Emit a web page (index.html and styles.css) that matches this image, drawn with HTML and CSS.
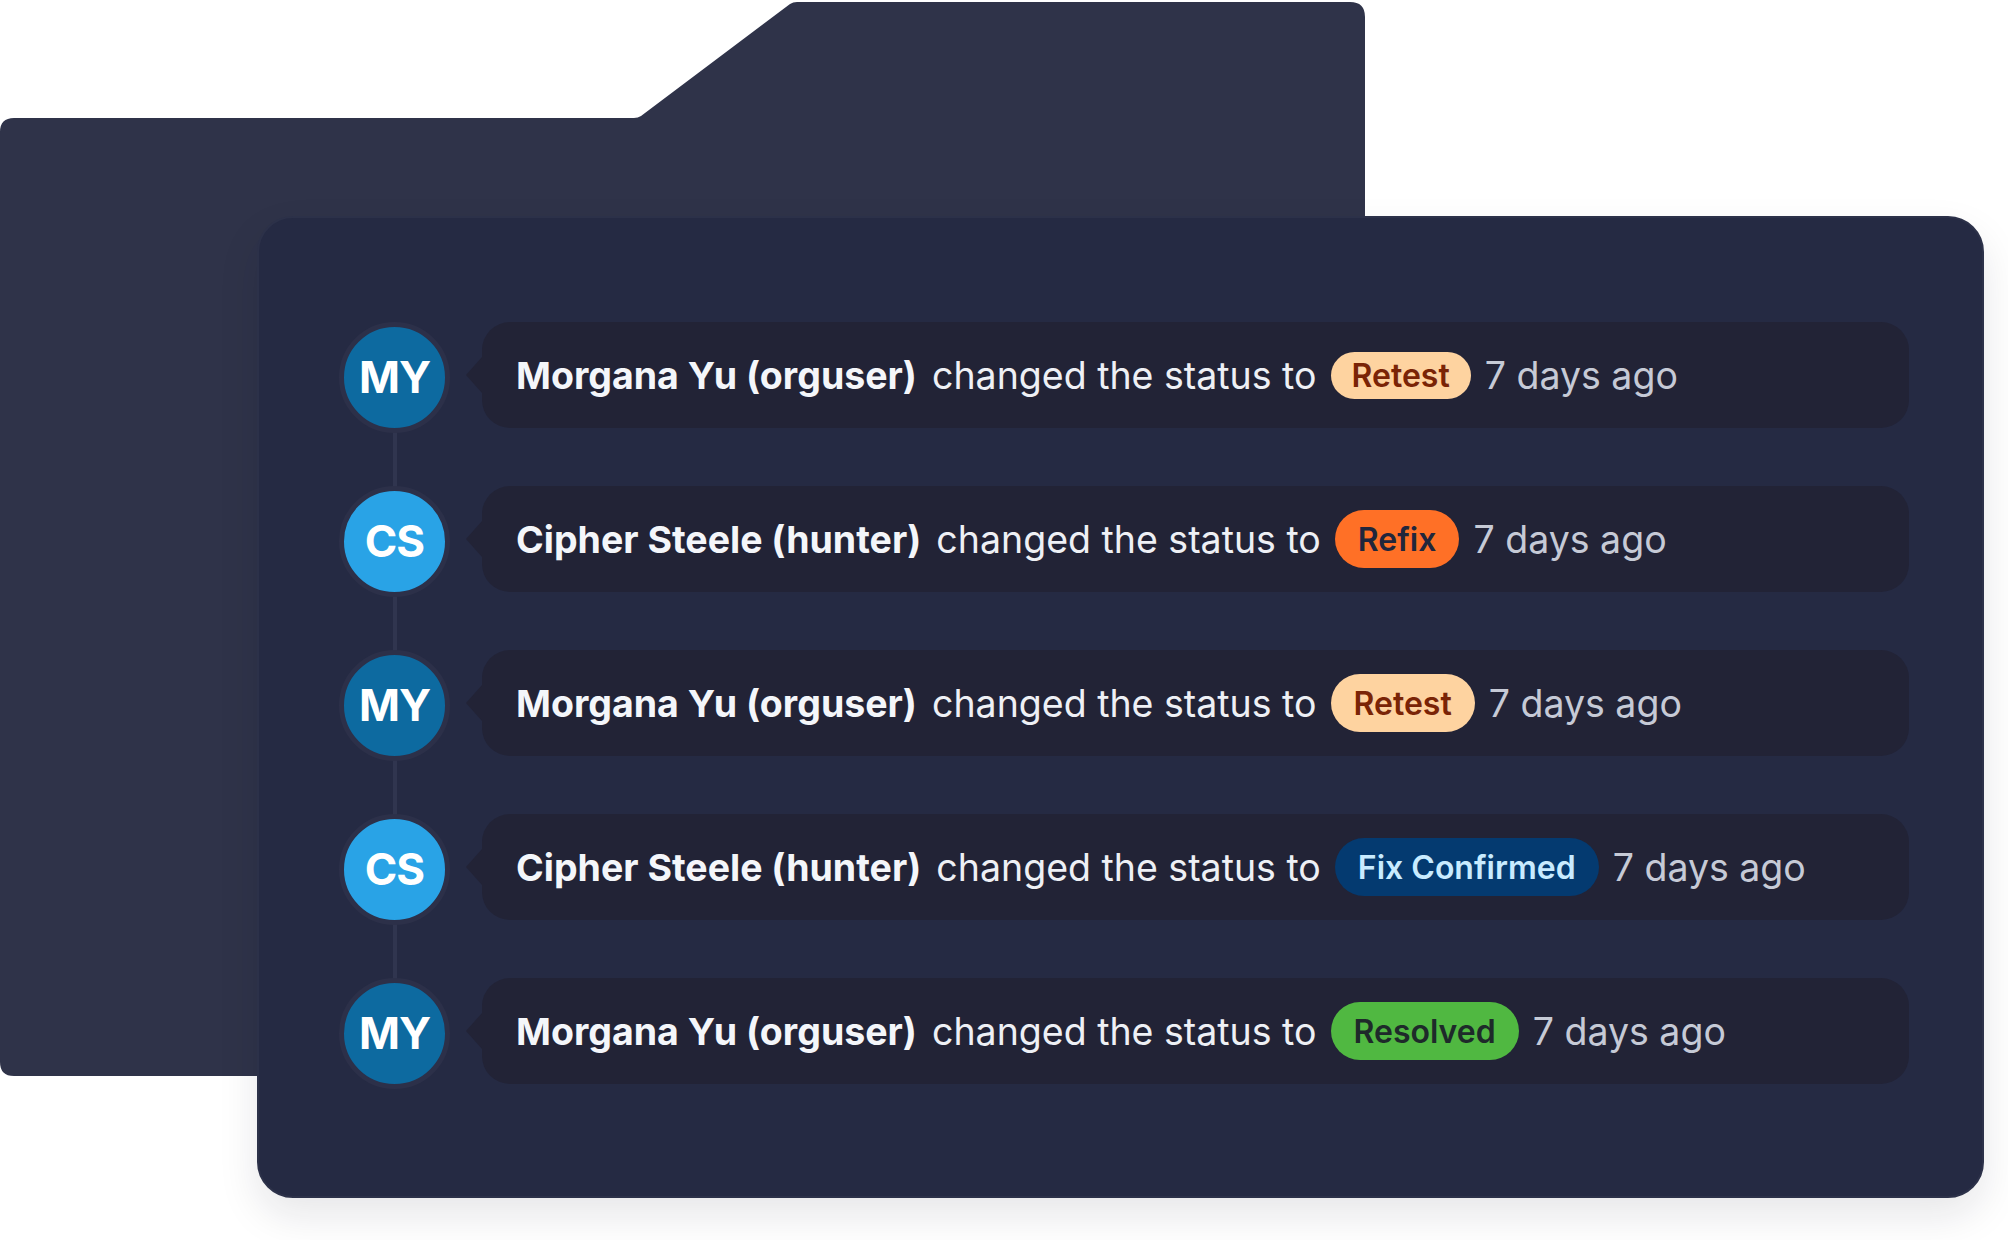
FILE: index.html
```html
<!DOCTYPE html>
<html>
<head>
    <meta charset="utf-8">
    <title>Activity</title>
    <link rel="stylesheet" href="styles.css">
</head>
<body>
    <div class="stage">
        <svg class="folder" width="1365" height="1078" viewBox="0 0 1365 1078">
            <path d="M0,132 Q0,118 14,118 L634,118 Q638,118 641,116 L790,4 Q793,2 797,2 L1350,2 Q1365,2 1365,17 L1365,1076 L14,1076 Q0,1076 0,1062 Z" fill="#2f3349"/>
        </svg>
        <div class="card">
            <ul class="timeline">
                <li class="item">
                    <div class="avatar dark">MY</div>
                    <div class="entry">
                        <b class="who">Morgana Yu (orguser)</b>
                        <span class="what">changed the status to</span>
                        <span class="badge slim retest">Retest</span>
                        <span class="when">7 days ago</span>
                    </div>
                </li>
                <li class="item">
                    <div class="avatar light">CS</div>
                    <div class="entry">
                        <b class="who">Cipher Steele (hunter)</b>
                        <span class="what">changed the status to</span>
                        <span class="badge refix">Refix</span>
                        <span class="when">7 days ago</span>
                    </div>
                </li>
                <li class="item">
                    <div class="avatar dark">MY</div>
                    <div class="entry">
                        <b class="who">Morgana Yu (orguser)</b>
                        <span class="what">changed the status to</span>
                        <span class="badge retest">Retest</span>
                        <span class="when">7 days ago</span>
                    </div>
                </li>
                <li class="item">
                    <div class="avatar light">CS</div>
                    <div class="entry">
                        <b class="who">Cipher Steele (hunter)</b>
                        <span class="what">changed the status to</span>
                        <span class="badge confirmed">Fix Confirmed</span>
                        <span class="when">7 days ago</span>
                    </div>
                </li>
                <li class="item">
                    <div class="avatar dark">MY</div>
                    <div class="entry">
                        <b class="who">Morgana Yu (orguser)</b>
                        <span class="what">changed the status to</span>
                        <span class="badge resolved">Resolved</span>
                        <span class="when">7 days ago</span>
                    </div>
                </li>
            </ul>
        </div>
    </div>
</body>
</html>
```

FILE: styles.css
```css
*
{
    margin: 0;
    padding: 0;
    box-sizing: border-box;
}
body
{
    background: #ffffff;
    font-family: Inter, Lato, sans-serif;
}
.stage
{
    position: relative;
    width: 2008px;
    height: 1240px;
    padding-top: 216px;
    padding-left: 257px;
}
.folder
{
    position: absolute;
    top: 0;
    left: 0;
}
.card
{
    position: relative;
    width: 1727px;
    height: 982px;
    background: #252a43;
    border: 2px solid #2c3149;
    border-radius: 36px;
    box-shadow: 0 18px 40px rgba(20, 24, 40, 0.10);
    padding: 104px 73px 0 80px;
}
.timeline
{
    list-style: none;
    display: flex;
    flex-direction: column;
    gap: 58px;
}
.item
{
    position: relative;
    display: flex;
    align-items: center;
    height: 106px;
}
.item::before
{
    content: "";
    position: absolute;
    left: 54px;
    top: 55px;
    width: 4px;
    height: 164px;
    background: #30354f;
}
.item:last-child::before
{
    display: none;
}
.avatar
{
    position: relative;
    z-index: 1;
    flex: none;
    width: 111px;
    height: 111px;
    border-radius: 50%;
    border: 5px solid #2c3049;
    display: flex;
    align-items: center;
    justify-content: center;
    color: #ffffff;
    font-weight: 700;
    font-size: 44px;
    letter-spacing: -1px;
    margin-top: 4px;
}
.avatar.dark
{
    background: #0d6aa0;
}
.avatar.light
{
    background: #29a3e6;
}
.entry
{
    position: relative;
    flex: 1;
    height: 106px;
    margin-left: 32px;
    background: #222336;
    border-radius: 28px;
    display: flex;
    align-items: center;
    gap: 14px;
    padding-left: 34px;
    font-size: 37.5px;
    white-space: nowrap;
}
.entry::before
{
    content: "";
    position: absolute;
    left: -16px;
    top: 35px;
    border-right: 16px solid #222336;
    border-top: 18px solid transparent;
    border-bottom: 18px solid transparent;
}
.who
{
    color: #f4f6fa;
    font-weight: 700;
    margin-right: 1px;
}
.what
{
    color: #eef0f5;
}
.when
{
    color: #c6cad6;
}
.badge
{
    display: inline-flex;
    align-items: center;
    height: 58px;
    padding: 0 23px;
    border-radius: 29px;
    font-size: 32px;
    font-weight: 600;
}
.badge.slim
{
    height: 47px;
    padding: 0 21px;
}
.retest
{
    background: #fed3a0;
    color: #7a2406;
}
.refix
{
    background: #ff7026;
    color: #21263c;
}
.confirmed
{
    background: #043a70;
    color: #c8ebff;
}
.resolved
{
    background: #50b841;
    color: #1e2a2a;
}
```
